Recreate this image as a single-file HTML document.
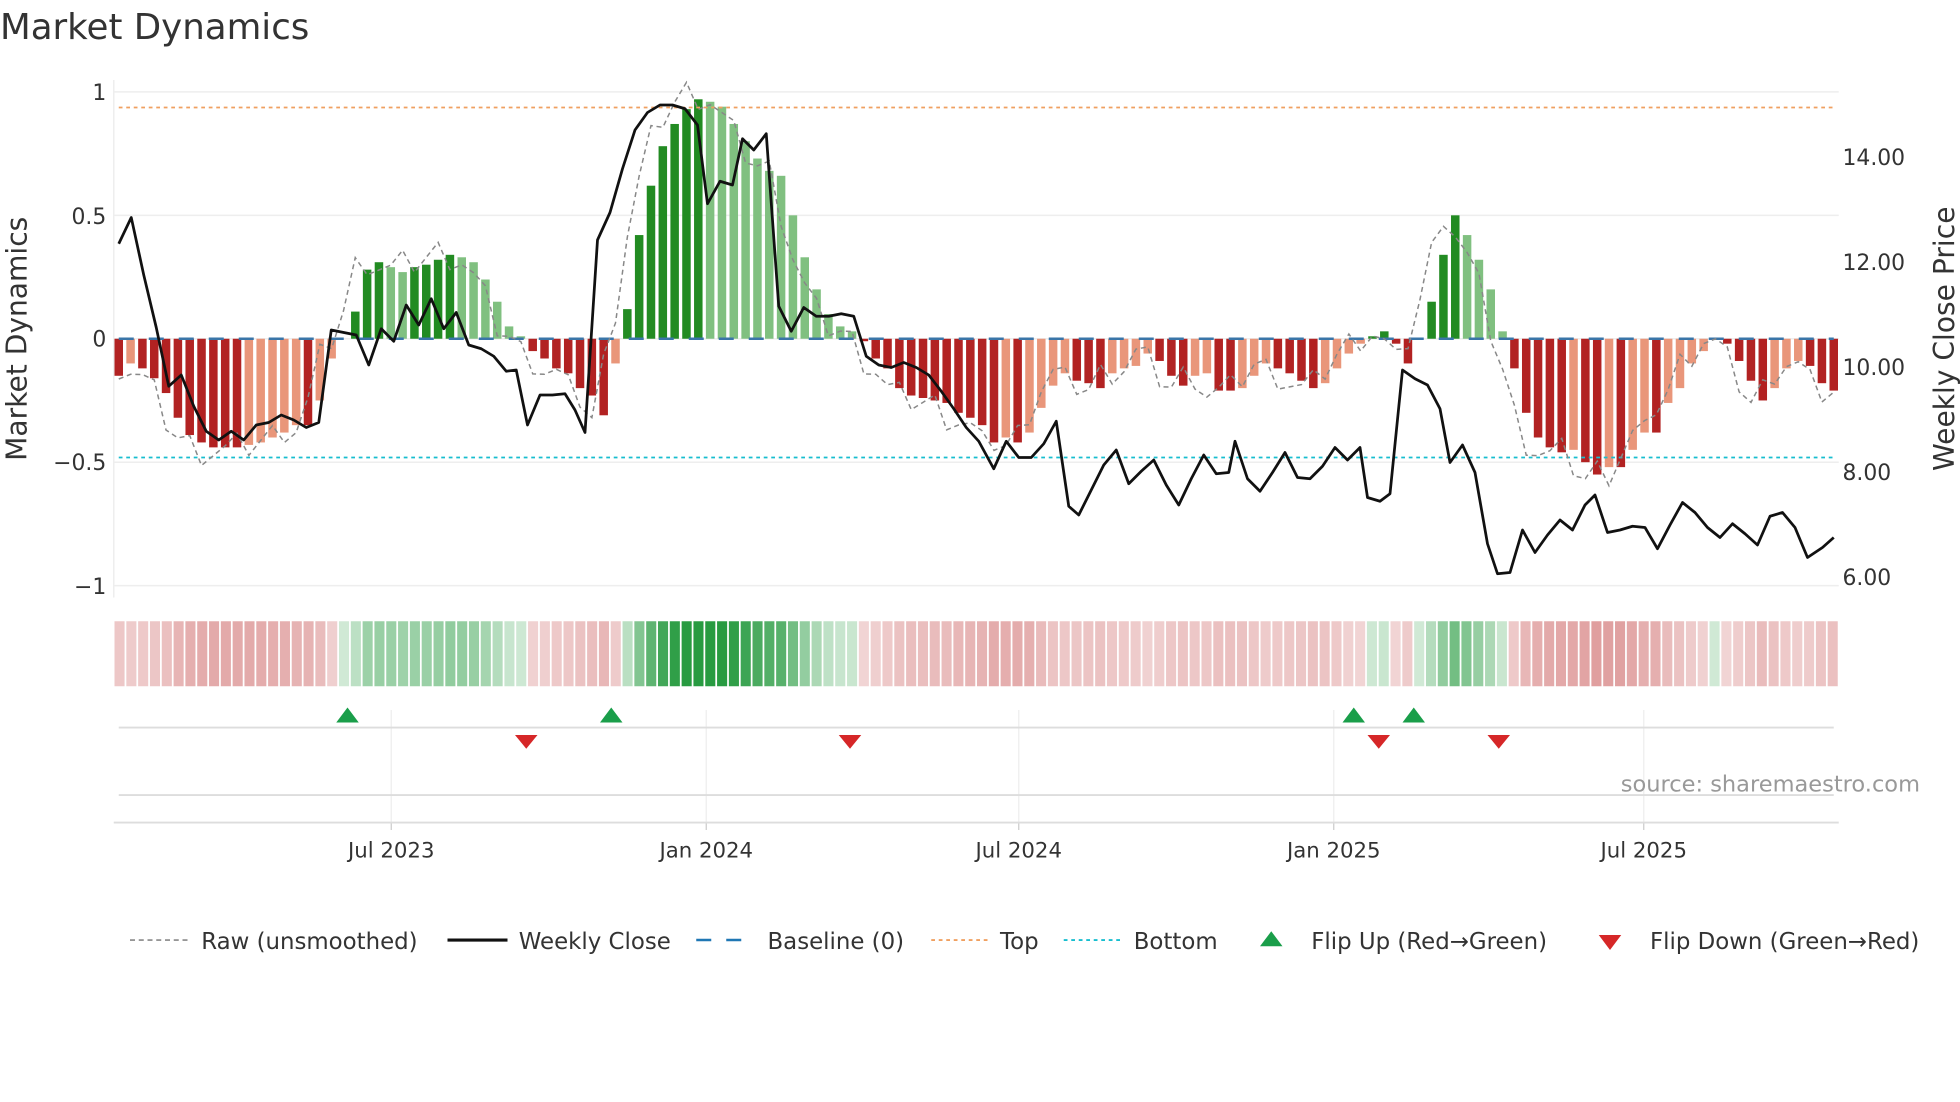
<!DOCTYPE html>
<html><head><meta charset="utf-8"><style>
html,body{margin:0;padding:0;background:#fff;}
svg{display:block;}
text{font-family:"DejaVu Sans","Liberation Sans",sans-serif;fill:#333;}
</style></head><body>
<svg id="s" width="1960" height="1102" viewBox="0 0 1568 881.6" xmlns="http://www.w3.org/2000/svg">
<text x="0" y="31" font-size="28.5">Market Dynamics</text>
<g id="grid"></g>
<g id="bars"></g>
<g id="lines"></g>
<g id="strip"></g>
<g id="bottom"></g>
<g font-size="17.5">
<text x="85" y="80" text-anchor="end">1</text>
<text x="85" y="179" text-anchor="end">0.5</text>
<text x="85" y="277" text-anchor="end">0</text>
<text x="85" y="376" text-anchor="end">−0.5</text>
<text x="85" y="475" text-anchor="end">−1</text>
<text x="1474" y="132">14.00</text>
<text x="1474" y="216">12.00</text>
<text x="1474" y="300">10.00</text>
<text x="1474" y="384">8.00</text>
<text x="1474" y="468">6.00</text>
<text x="313" y="686" text-anchor="middle" font-size="17">Jul 2023</text>
<text x="565" y="686" text-anchor="middle" font-size="17">Jan 2024</text>
<text x="815" y="686" text-anchor="middle" font-size="17">Jul 2024</text>
<text x="1067" y="686" text-anchor="middle" font-size="17">Jan 2025</text>
<text x="1315" y="686" text-anchor="middle" font-size="17">Jul 2025</text>
</g>
<text transform="translate(21,271) rotate(-90)" text-anchor="middle" font-size="22.5">Market Dynamics</text>
<text transform="translate(1563,271) rotate(-90)" text-anchor="middle" font-size="22.5">Weekly Close Price</text>
<text x="1536" y="633" text-anchor="end" font-size="18" style="fill:#999">source: sharemaestro.com</text>
<g font-size="18.3">
<line x1="104" y1="752" x2="150" y2="752" stroke="#888" stroke-width="1.3" stroke-dasharray="4,3"/>
<text x="161" y="759">Raw (unsmoothed)</text>
<line x1="358" y1="752" x2="406" y2="752" stroke="#111" stroke-width="2.5"/>
<text x="415" y="759">Weekly Close</text>
<line x1="557" y1="752" x2="603" y2="752" stroke="#1f77b4" stroke-width="2" stroke-dasharray="12,12"/>
<text x="614" y="759">Baseline (0)</text>
<line x1="745" y1="752" x2="790" y2="752" stroke="#f0a060" stroke-width="1.5" stroke-dasharray="3,3"/>
<text x="800" y="759">Top</text>
<line x1="851" y1="752" x2="896" y2="752" stroke="#17becf" stroke-width="1.5" stroke-dasharray="3,3"/>
<text x="907" y="759">Bottom</text>
<polygon points="1008,757 1026,757 1017,745" fill="#1a9e4a"/>
<text x="1049" y="759">Flip Up (Red→Green)</text>
<polygon points="1279,748 1297,748 1288,760" fill="#d62728"/>
<text x="1320" y="759">Flip Down (Green→Red)</text>
</g>
</svg>
<script>
var NS="http://www.w3.org/2000/svg";
function el(p,t,a){var e=document.createElementNS(NS,t);for(var k in a)e.setAttribute(k,a[k]);document.getElementById(p).appendChild(e);return e;}
var v=[-0.15,-0.1,-0.12,-0.16,-0.22,-0.32,-0.39,-0.42,-0.44,-0.44,-0.44,-0.43,-0.42,-0.4,-0.38,-0.35,-0.35,-0.25,-0.08,0.0,
0.11,0.28,0.31,0.29,0.27,0.29,0.30,0.32,0.34,0.33,0.31,0.24,0.15,0.05,0.01,-0.05,-0.08,-0.12,-0.14,-0.2,-0.23,-0.31,-0.1,
0.12,0.42,0.62,0.78,0.87,0.93,0.97,0.96,0.94,0.87,0.8,0.73,0.68,0.66,0.5,0.33,0.2,0.1,0.05,0.03,-0.01,
-0.08,-0.12,-0.2,-0.23,-0.24,-0.25,-0.26,-0.3,-0.32,-0.35,-0.42,-0.4,-0.42,-0.38,-0.28,-0.19,-0.14,-0.17,-0.18,-0.2,-0.14,-0.12,-0.11,-0.06,-0.09,-0.15,-0.19,-0.15,-0.14,-0.21,-0.21,-0.2,-0.15,-0.1,-0.12,-0.14,-0.17,-0.2,-0.18,-0.12,-0.06,-0.02,
0.01,0.03,-0.02,-0.1,0.0,0.15,0.34,0.5,0.42,0.32,0.2,0.03,
-0.12,-0.3,-0.4,-0.44,-0.46,-0.45,-0.5,-0.55,-0.52,-0.52,-0.45,-0.38,-0.38,-0.26,-0.2,-0.1,-0.05,-0.0,-0.02,-0.09,-0.17,-0.25,-0.2,-0.12,-0.09,-0.11,-0.18,-0.21];
var N=v.length, x0=95, dx=(1467-95)/(N-1);
function Y(val){return 271-val*197.5;}
[1,0.5,0,-0.5,-1].forEach(function(g){el("grid","line",{x1:91,x2:1471,y1:Y(g),y2:Y(g),stroke:"#eee","stroke-width":1.2});});
el("grid","line",{x1:91,x2:91,y1:64,y2:478,stroke:"#eee","stroke-width":1.2});
for(var i=0;i<N;i++){var x=x0+i*dx,val=v[i],p=i?v[i-1]:val,c;
 if(val>=0)c=(val>p)?"#228b22":"#80c080"; else c=(val<=p)?"#b22222":"#e9967a";
 var y1=Y(Math.max(val,0)),h=Math.abs(val)*197.5; if(h<0.5)continue;
 el("bars","rect",{x:x-3.4,y:y1,width:6.8,height:h,fill:c});}
el("lines","line",{x1:95,x2:1467,y1:86,y2:86,stroke:"#f0a060","stroke-width":1.4,"stroke-dasharray":"3,3"});
el("lines","line",{x1:95,x2:1467,y1:366,y2:366,stroke:"#17becf","stroke-width":1.4,"stroke-dasharray":"3,3"});
el("lines","line",{x1:95,x2:1467,y1:271,y2:271,stroke:"#3a75a8","stroke-width":2,"stroke-dasharray":"12,12"});
var rp="";for(var i=0;i<N;i++){var j=Math.min(N-1,i+1);var r=v[j]*1.03+((i*37%7)-3)*0.02;rp+=(i?"L":"M")+(x0+i*dx).toFixed(1)+" "+Y(r).toFixed(1);}
el("lines","path",{d:rp,fill:"none",stroke:"#888","stroke-width":1.2,"stroke-dasharray":"4,3"});
var pr=[95,195,105,174,115,220,125,262,135,309,145,300,155,325,165,345,175,352,185,345,195,352,205,340,215,338,225,332,235,336,245,342,255,338,265,264,275,266,285,268,295,292,305,263,315,273,325,244,335,260,345,239,355,263,365,250,375,276,385,279,395,285,405,297,413,296,422,340,432,316,442,316,452,315,460,328,468,346,478,192,488,170,498,135,508,104,518,90,528,84,538,84,548,87,558,100,566,163,576,145,586,148,594,111,603,120,613,107,623,245,633,265,643,246,653,253,663,253,673,251,683,253,693,285,703,292,713,294,723,290,733,294,743,300,753,313,763,327,773,342,783,353,795,375,805,353,815,366,825,366,835,355,845,337,855,405,863,412,873,392,883,372,893,360,903,387,913,377,923,368,933,388,943,404,953,383,963,364,973,379,983,378,988,353,998,383,1008,393,1018,378,1028,362,1038,382,1048,383,1058,373,1068,358,1078,368,1088,358,1094,398,1104,401,1112,395,1122,296,1132,303,1142,308,1152,327,1160,370,1170,356,1180,378,1190,435,1198,459,1208,458,1218,424,1228,442,1238,428,1248,416,1258,424,1268,404,1276,396,1286,426,1296,424,1306,421,1316,422,1326,439,1336,420,1346,402,1356,410,1366,422,1376,430,1386,419,1396,427,1406,436,1416,413,1426,410,1436,422,1446,446,1458,438,1467,430];
var pp="";for(var k=0;k<pr.length;k+=2)pp+=(k?"L":"M")+pr[k]+" "+pr[k+1];
el("lines","path",{d:pp,fill:"none",stroke:"#111","stroke-width":2.2,"stroke-linejoin":"round"});
var sw=(1471-91)/N;
for(var i=0;i<N;i++){var val=v[i],c;
 if(val>=0)c="rgba(40,155,65,"+(0.22+0.85*val).toFixed(2)+")"; else c="rgba(195,70,70,"+(0.22+0.55*Math.abs(val)).toFixed(2)+")";
 el("strip","rect",{x:91+i*sw+0.6,y:497,width:sw-1.4,height:52,fill:c});}
[313,565,815,1067,1315].forEach(function(x){el("bottom","line",{x1:x,x2:x,y1:568,y2:658,stroke:"#eee","stroke-width":1});el("bottom","line",{x1:x,x2:x,y1:658,y2:664,stroke:"#ccc","stroke-width":1});});
el("bottom","line",{x1:95,x2:1467,y1:582,y2:582,stroke:"#ddd","stroke-width":1.5});
el("bottom","line",{x1:95,x2:1467,y1:636,y2:636,stroke:"#ddd","stroke-width":1.5});
el("bottom","line",{x1:91,x2:1471,y1:658,y2:658,stroke:"#ddd","stroke-width":1.5});
[278,489,1083,1131].forEach(function(x){el("bottom","polygon",{points:(x-9)+",578 "+(x+9)+",578 "+x+",566",fill:"#1a9e4a"});});
[421,680,1103,1199].forEach(function(x){el("bottom","polygon",{points:(x-9)+",588 "+(x+9)+",588 "+x+",599",fill:"#d62728"});});
</script>
</body></html>
